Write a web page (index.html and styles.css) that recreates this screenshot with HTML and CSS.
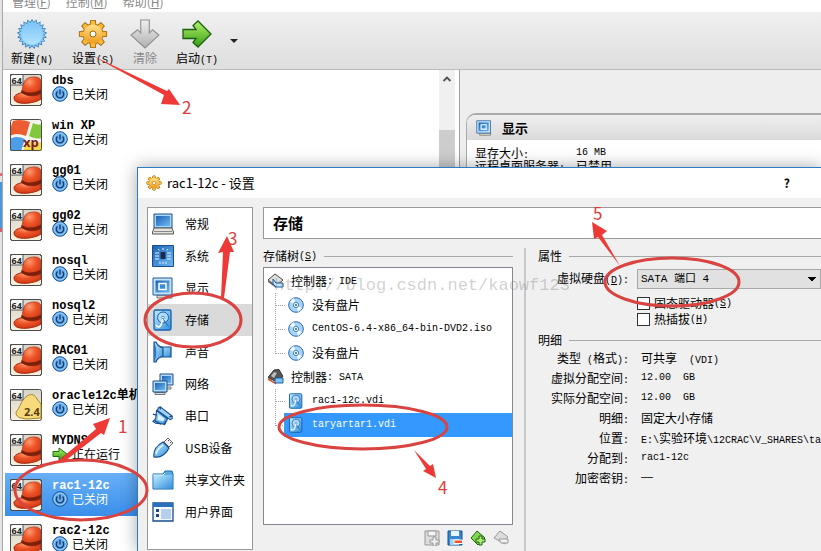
FILE: index.html
```html
<!DOCTYPE html>
<html lang="zh-CN">
<head>
<meta charset="utf-8">
<title>rac1-12c - 设置</title>
<link rel="stylesheet" href="styles.css">
</head>
<body>
<svg class="defs" aria-hidden="true">
  <defs>
    <linearGradient id="blue" x1="0" y1="0" x2="1" y2="1"><stop offset="0" stop-color="#c4ecff"/><stop offset="1" stop-color="#2f8fdc"/></linearGradient>
    <linearGradient id="sky" x1="0" y1="0" x2="0" y2="1"><stop offset="0" stop-color="#7cc4f8"/><stop offset="1" stop-color="#b4e4ff"/></linearGradient>
    <linearGradient id="deep" x1="0" y1="0" x2="1" y2="1"><stop offset="0" stop-color="#1c62b4"/><stop offset="1" stop-color="#6cb8f4"/></linearGradient>
    <linearGradient id="gold" x1="0" y1="0" x2="0" y2="1"><stop offset="0" stop-color="#ffe08a"/><stop offset="1" stop-color="#ee9c1c"/></linearGradient>
    <linearGradient id="green" x1="0" y1="0" x2="0" y2="1"><stop offset="0" stop-color="#b4f070"/><stop offset="1" stop-color="#35a010"/></linearGradient>
    <linearGradient id="grey" x1="0" y1="0" x2="0" y2="1"><stop offset="0" stop-color="#f0f0f0"/><stop offset="1" stop-color="#b0b0b0"/></linearGradient>
    <radialGradient id="hatfill" cx=".4" cy=".25" r=".8"><stop offset="0" stop-color="#ff9a70"/><stop offset=".45" stop-color="#ee5428"/><stop offset="1" stop-color="#cc3410"/></radialGradient>
    <linearGradient id="tile" x1="0" y1="0" x2="0" y2="1"><stop offset="0" stop-color="#d8d4c8"/><stop offset="1" stop-color="#f6f0dc"/></linearGradient>
    <g id="burst">
      <path id="tri" d="M14 0L26.120 21H1.880Z"/>
      <use href="#tri" transform="rotate(17.143 14 14)"/><use href="#tri" transform="rotate(34.286 14 14)"/><use href="#tri" transform="rotate(51.429 14 14)"/><use href="#tri" transform="rotate(68.571 14 14)"/><use href="#tri" transform="rotate(85.714 14 14)"/><use href="#tri" transform="rotate(102.857 14 14)"/>
    </g>
    <g id="cog">
      <circle cx="14" cy="14" r="9.5"/>
      <path id="tooth" d="M11.4 6L12 .8H16L16.6 6V22L16 27.2H12L11.4 22Z"/>
      <use href="#tooth" transform="rotate(45 14 14)"/><use href="#tooth" transform="rotate(90 14 14)"/><use href="#tooth" transform="rotate(135 14 14)"/>
    </g>
    <symbol id="new" viewBox="-1 -1 30 30"><use href="#burst" fill="#2c6fae" stroke="#2c6fae" stroke-width="1.2"/><use href="#burst" fill="#84caf8"/><circle cx="14" cy="14" r="10.500" fill="url(#sky)"/></symbol>
    <symbol id="gear" viewBox="-1 -1 30 30"><use href="#cog" fill="#a06a10" stroke="#a06a10" stroke-width="1.8"/><use href="#cog" fill="#f8b83c"/><circle cx="14" cy="14" r="9.5" fill="url(#gold)"/><circle cx="14" cy="14" r="3" fill="#fff" stroke="#a06a10"/></symbol>
    <symbol id="discard" viewBox="0 0 28 28"><path d="M10 1h8v12l3-3 6 5-13 12L1 15l6-5 3 3z" fill="url(#grey)" stroke="#8c8c8c"/></symbol>
    <symbol id="start" viewBox="0 0 30 28"><path d="M1 9.5h13l-3-4L16 1l13 13-13 13-5-4.500 3-4H1z" fill="url(#green)" stroke="#1e5e10" stroke-width="1.3"/></symbol>
    <symbol id="hat" viewBox="0 0 32 32">
      <rect x=".5" y=".5" width="31" height="31" rx="2" fill="url(#tile)" stroke="#4c4c4c"/>
      <path d="M31 17c-10 0-27 1-27 7 0 5 8 6 15 5 6-1 9-2 12-4z" fill="url(#hatfill)" stroke="#a02810"/>
      <path d="M12 18C13 9 14 5 20 3.500c6-1.500 10 0 11 3V20c-6 3-14 3-19-2z" fill="url(#hatfill)" stroke="#b03010" stroke-width=".7"/>
      <path d="M11.500 16c5 3.500 13 3.500 19.500-.5v4c-6 3.500-15 3-20-.8z" fill="#7c200c"/>
      <path d="M.5.5H13V11H.5z" fill="#fafaf8" stroke="#555"/><text x="1.500" y="9.500" class="tag">64</text>
      <rect x=".5" y=".5" width="31" height="31" rx="2" fill="none" stroke="#4c4c4c"/>
    </symbol>
    <symbol id="kernel" viewBox="0 0 32 32">
      <rect x=".5" y=".5" width="31" height="31" rx="2" fill="url(#tile)" stroke="#4c4c4c"/>
      <path d="M17 7c5-3 8-1 10 3l4 5v14l-14 1c-8-1-11-2-11-7 4-4 5-12 11-16z" fill="#f6da7c" stroke="#a8862c"/>
      <path d="M.5.5H13V11H.5z" fill="#fafaf8" stroke="#555"/><text x="1.500" y="9.500" class="tag">64</text>
      <text x="14" y="27" class="ver">2.4</text>
    </symbol>
    <symbol id="xp" viewBox="0 0 32 32">
      <rect width="32" height="32" rx="2" fill="#f4f4ec"/>
      <path d="M3 2c6-2 11-1 17 1l-4 14C10 15 6 14 0 17V10z" fill="#ec5c30"/>
      <path d="M23 4c4 2 6 2 9 1v14c-5 1-9 0-13-2z" fill="#82c83c"/>
      <path d="M0 20c6-3 10-2 15 0l-4 12H0z" fill="#4c9ee8"/>
      <path d="M17 22c5 2 9 2 15 1v9H13z" fill="#f6d84c"/>
      <text x="13" y="28" class="xp-text">xp</text>
      <rect x=".5" y=".5" width="31" height="31" rx="2" fill="none" stroke="#4c4c4c"/>
    </symbol>
    <symbol id="power" viewBox="0 0 16 16"><circle cx="8" cy="8" r="7.300" fill="#4a96dc" stroke="#18549c"/><circle cx="8" cy="8" r="6" fill="#6cb0ec" stroke="#a4d4fa"/><path d="M5.500 5.400a3.700 3.700 0 1 0 5 0M8 3.500V8.500" fill="none" stroke="#123c74" stroke-width="1.400"/></symbol>
    <symbol id="monitor" viewBox="0 0 22 22"><path d="M5 18h15v3H5z" fill="#d8d8c8" stroke="#777"/><path d="M1 1h19v17H1z" fill="#c8e4f8" stroke="#1c5896"/><path d="M3.500 3.500h14v12h-14z" fill="url(#deep)"/><path d="M7 6.500h7v6H7z" fill="#3c8cd8" stroke="#fff" stroke-width="1.500"/></symbol>
    <symbol id="general" viewBox="0 0 22 22"><path d="M2 1h18v14H2z" fill="#a8d8fc" stroke="#1c4c88"/><path d="M4 3h14v10H4z" fill="url(#deep)"/><path d="M2 15h18l1.500 4v2H.5v-2z" fill="#e4e4dc" stroke="#555"/><path d="M2 18.500h18" stroke="#888"/></symbol>
    <symbol id="system" viewBox="0 0 22 22"><path d="M.5.5h21v21H.5z" fill="url(#deep)" stroke="#184c8c"/><path d="M8.500 7h5v7h-5z" fill="#182c50"/><path d="M3 8h4M3 11h4M3 14h4M15 8h4M15 11h4M15 14h4M8 16.500V19M11 16.500V19M14 16.500V19M11 3v2M6 4l1.500 1.500M16 4l-1.500 1.500" stroke="#e4f4ff"/></symbol>
    <symbol id="disk" viewBox="0 0 22 22"><rect x="2" y="1" width="17" height="20" rx="1.500" fill="url(#blue)" stroke="#1860ac" stroke-width="1.300"/><circle cx="11" cy="8.500" r="5.500" fill="#b0dcfa" stroke="#1860ac"/><circle cx="11" cy="8.500" r="1.300" fill="#fff" stroke="#1860ac" stroke-width=".7"/><path d="M11 10l-2 6c-1 3-4 2-5 0" fill="none" stroke="#fff" stroke-width="1.600"/><path d="M11.500 10.500l5 7" stroke="#1860ac"/></symbol>
    <symbol id="sound" viewBox="0 0 22 22"><path d="M7 6h12v10H7z" fill="url(#blue)" stroke="#184c8c" stroke-width="1.200"/><path d="M2 1h2c1 3 4 5 7 6v8c-3 1-6 3-7 6H2z" fill="url(#blue)" stroke="#184c8c" stroke-width="1.200"/><path d="M2 1v20c3-5 3-15 0-20z" fill="#2c74c0"/></symbol>
    <symbol id="network" viewBox="0 0 22 22"><path d="M8 1h13v11H8z" fill="#b4dcfa" stroke="#1c4c88"/><path d="M10 3h9v7h-9z" fill="url(#deep)"/><path d="M11 14h8v2h-8zM3 19.500h10v2H3z" fill="#ddd" stroke="#777"/><path d="M1 8h14v11H1z" fill="#b4dcfa" stroke="#1c4c88"/><path d="M3 10h10v7H3z" fill="url(#deep)"/></symbol>
    <symbol id="serial" viewBox="0 0 24 22"><path d="M5 5l12 9-3 6-10-1-3-2 3-3z" fill="url(#blue)" stroke="#184c8c" stroke-width="1.200"/><path d="M7 2l2-1 13 10v3l-2 1L6 5z" fill="#9cd4f8" stroke="#184c8c" stroke-width="1.200"/><path d="M9 1v3M22 11l-3 1M1 9l4 1M13 21l2-4M3 16l7 4" stroke="#184c8c" fill="none" stroke-width="1.500"/><path d="M7 9l7 5-2 3-6-2z" fill="#dcf2ff"/></symbol>
    <symbol id="usb" viewBox="0 0 22 22"><path d="M12 5l4-4 5 5-4 4z" fill="#eee" stroke="#666"/><path d="M16 3l1 1M18 5l1 1" stroke="#444"/><path d="M2 20C1 13 4 9 11 5l6 6c-3 6-8 10-15 9z" fill="url(#blue)" stroke="#184c8c" stroke-width="1.200"/><path d="M4 17c1-4 3-6 7-9" fill="none" stroke="#e8f8ff" stroke-width="1.500"/></symbol>
    <symbol id="folder" viewBox="0 0 22 22"><path d="M1 5h10l2-3h7l1 3v15H1z" fill="#58acdf" stroke="#1868ac"/><path d="M1.500 6h19v13.500h-19z" fill="url(#blue)"/><path d="M1 6h10l2-2" fill="none" stroke="#d8f4ff"/></symbol>
    <symbol id="interface" viewBox="0 0 22 22"><path d="M1 2h20v18H1z" fill="#f4f8fc" stroke="#184c8c" stroke-width="1.300"/><path d="M1 2h20v4H1z" fill="#2870bc"/><path d="M9 8h10v10H9z" fill="#b4d0ec"/><path d="M4 8h3v3H4zM4 13h3v3H4z" fill="#1c4880"/></symbol>
    <symbol id="cd" viewBox="0 0 16 16"><circle cx="8" cy="8" r="7.300" fill="#a8d4f8" stroke="#2c68a8"/><path d="M8 8L2 5a7 7 0 0 1 4-4zM8 8l6 3a7 7 0 0 1-4 4z" fill="#e8f8ff"/><circle cx="8" cy="8" r="2.600" fill="#fff" stroke="#3c80c0"/><circle cx="8" cy="8" r="1" fill="#245c9c"/></symbol>
    <symbol id="ide" viewBox="0 0 16 16"><path d="M7 1l8 6-7 6-8-6z" fill="#e0e0dc" stroke="#444"/><path d="M0 7l8 6v2L0 9z" fill="#666"/><path d="M5 6l3 4h7v4H8L5 11z" fill="#c4e8ff" stroke="#1c5ca4"/></symbol>
    <symbol id="sata" viewBox="0 0 16 16"><path d="M6 1l5-.5 4 7-7 5-8-4z" fill="#555" stroke="#333"/><path d="M0 9l8 5v1.500L0 11z" fill="#d84c28"/><path d="M3 7l3-4 3 1-3 5z" fill="#bbb"/><path d="M7 9h8v5H7z" fill="#7cc4f4" stroke="#1c5ca4"/></symbol>
    <symbol id="add-disk" viewBox="0 0 16 16"><path d="M1 1h14v14H1z" fill="#ddd" stroke="#999"/><path d="M4 1h8v5H4z" fill="#f4f4f4" stroke="#999"/><path d="M9 7h3v3h3v3h-3v3H9v-3H6v-3h3z" fill="#eee" stroke="#999"/></symbol>
    <symbol id="remove-disk" viewBox="0 0 16 16"><path d="M1 1h14v14H1z" fill="#3888d0" stroke="#184c8c"/><path d="M4 1h8v5H4z" fill="#e8f4ff"/><path d="M3 9h9v6H3z" fill="#9cd0f4"/><path d="M7 10h8.500v3.500H7z" fill="#ee5030" stroke="#fff"/></symbol>
    <symbol id="add-ctl" viewBox="0 0 16 16"><path d="M7 1l8 7-7 7-7-7z" fill="#80d850" stroke="#246010"/><path d="M9 6h3v3h3v3h-3v3H9v-3H6V9h3z" fill="#a8f078" stroke="#246010"/></symbol>
    <symbol id="remove-ctl" viewBox="0 0 16 16"><path d="M7 1l8 6-3 3v4L1 8z" fill="#ddd" stroke="#999"/><path d="M6 9h9v4H8z" fill="#f0f0f0" stroke="#999"/></symbol>
    <symbol id="go" viewBox="0 0 16 16"><path d="M1 5.500h6V2l8 6-8 6v-3.500H1z" fill="url(#green)" stroke="#1e6e10"/></symbol>
  </defs>
</svg>

<div class="manager">
  <nav class="menubar"><a href="#">管理(<u>F</u>)</a><a href="#">控制(<u>M</u>)</a><a href="#">帮助(<u>H</u>)</a></nav>
  <div class="toolbar">
    <button class="tool"><svg><use href="#new"/></svg><span>新建<span class="en">(N)</span></span></button>
    <button class="tool"><svg><use href="#gear"/></svg><span>设置<span class="en">(S)</span></span></button>
    <button class="tool" disabled><svg><use href="#discard"/></svg><span>清除</span></button>
    <button class="tool"><svg><use href="#start"/></svg><span>启动<span class="en">(T)</span></span></button>
    <button class="more" aria-label="更多"></button>
  </div>
  <main class="content">
    <ul class="machines">
      <li><svg class="os"><use href="#hat"/></svg><div><b>dbs</b><span><svg><use href="#power"/></svg>已关闭</span></div></li>
      <li><svg class="os"><use href="#xp"/></svg><div><b>win XP</b><span><svg><use href="#power"/></svg>已关闭</span></div></li>
      <li><svg class="os"><use href="#hat"/></svg><div><b>gg01</b><span><svg><use href="#power"/></svg>已关闭</span></div></li>
      <li><svg class="os"><use href="#hat"/></svg><div><b>gg02</b><span><svg><use href="#power"/></svg>已关闭</span></div></li>
      <li><svg class="os"><use href="#hat"/></svg><div><b>nosql</b><span><svg><use href="#power"/></svg>已关闭</span></div></li>
      <li><svg class="os"><use href="#hat"/></svg><div><b>nosql2</b><span><svg><use href="#power"/></svg>已关闭</span></div></li>
      <li><svg class="os"><use href="#hat"/></svg><div><b>RAC01</b><span><svg><use href="#power"/></svg>已关闭</span></div></li>
      <li><svg class="os"><use href="#kernel"/></svg><div><b>oracle12c单机</b><span><svg><use href="#power"/></svg>已关闭</span></div></li>
      <li><svg class="os"><use href="#hat"/></svg><div><b>MYDNS</b><span><svg><use href="#go"/></svg>正在运行</span></div></li>
      <li class="selected"><svg class="os"><use href="#hat"/></svg><div><b>rac1-12c</b><span><svg><use href="#power"/></svg>已关闭</span></div></li>
      <li><svg class="os"><use href="#hat"/></svg><div><b>rac2-12c</b><span><svg><use href="#power"/></svg>已关闭</span></div></li>
    </ul>
    <div class="scrollbar"><svg viewBox="0 0 16 16"><path d="M4.500 10L8 6.500 11.500 10" fill="none" stroke="#505050" stroke-width="1.800"/></svg><i></i></div>
    <section class="details">
      <div class="card">
        <h2><svg><use href="#monitor"/></svg>显示</h2>
        <dl><dt>显存大小<span class="en">:</span></dt><dd class="en">16 MB</dd><dt>远程桌面服务器<span class="en">:</span></dt><dd>已禁用</dd></dl>
      </div>
    </section>
  </main>
</div>

<section class="dialog" role="dialog" aria-label="设置">
  <header class="titlebar"><svg><use href="#gear"/></svg><span>rac1-12c - 设置</span><button aria-label="帮助">?</button></header>
  <div class="settings">
    <ul class="categories">
      <li><svg><use href="#general"/></svg>常规</li>
      <li><svg><use href="#system"/></svg>系统</li>
      <li><svg><use href="#monitor"/></svg>显示</li>
      <li class="current"><svg><use href="#disk"/></svg>存储</li>
      <li><svg><use href="#sound"/></svg>声音</li>
      <li><svg><use href="#network"/></svg>网络</li>
      <li><svg><use href="#serial"/></svg>串口</li>
      <li><svg><use href="#usb"/></svg>USB设备</li>
      <li><svg><use href="#folder"/></svg>共享文件夹</li>
      <li><svg><use href="#interface"/></svg>用户界面</li>
    </ul>
    <div class="page">
      <h1>存储</h1>
      <div class="columns">
        <div class="storage">
          <h3 class="group">存储树<span class="en">(<u>S</u>)</span></h3>
          <ul class="tree">
            <li><div class="ctl"><svg><use href="#ide"/></svg>控制器<span class="en">: IDE</span></div>
              <ul>
                <li><svg><use href="#cd"/></svg>没有盘片</li>
                <li><svg><use href="#cd"/></svg><span class="en">CentOS-6.4-x86_64-bin-DVD2.iso</span></li>
                <li><svg><use href="#cd"/></svg>没有盘片</li>
              </ul></li>
            <li><div class="ctl"><svg><use href="#sata"/></svg>控制器<span class="en">: SATA</span></div>
              <ul>
                <li><svg><use href="#disk"/></svg><span class="en">rac1-12c.vdi</span></li>
                <li class="active"><svg><use href="#disk"/></svg><span class="en">taryartar1.vdi</span></li>
              </ul></li>
          </ul>
          <div class="actions">
            <button disabled aria-label="添加虚拟硬盘"><svg><use href="#add-disk"/></svg></button>
            <button aria-label="删除虚拟硬盘"><svg><use href="#remove-disk"/></svg></button>
            <button aria-label="添加控制器"><svg><use href="#add-ctl"/></svg></button>
            <button disabled aria-label="删除控制器"><svg><use href="#remove-ctl"/></svg></button>
          </div>
        </div>
        <div class="props">
          <h3 class="group">属性</h3>
          <div class="form">
            <label for="port">虚拟硬盘<span class="en">(<u>D</u>):</span></label>
            <select id="port"><option>SATA 端口 4</option></select>
            <div class="checks">
              <label><input type="checkbox">固态驱动器<span class="en">(<u>S</u>)</span></label>
              <label><input type="checkbox">热插拔<span class="en">(<u>H</u>)</span></label>
            </div>
          </div>
          <h3 class="group">明细</h3>
          <dl class="info">
            <dt>类型<span class="en"> (</span>格式<span class="en">):</span></dt><dd>可共享<span class="en">&nbsp; (VDI)</span></dd>
            <dt>虚拟分配空间<span class="en">:</span></dt><dd class="en">12.00&nbsp; GB</dd>
            <dt>实际分配空间<span class="en">:</span></dt><dd class="en">12.00&nbsp; GB</dd>
            <dt>明细<span class="en">:</span></dt><dd>固定大小存储</dd>
            <dt>位置<span class="en">:</span></dt><dd><span class="en">E:\</span>实验环境<span class="en">\12CRAC\V_SHARES\ta</span></dd>
            <dt>分配到<span class="en">:</span></dt><dd class="en">rac1-12c</dd>
            <dt>加密密钥<span class="en">:</span></dt><dd class="en">——</dd>
          </dl>
        </div>
      </div>
    </div>
  </div>
</section>

<div class="watermark">http://blog.csdn.net/kaowf123</div>
<svg class="marks" viewBox="0 0 821 551" width="821" height="551">
  <g fill="none" stroke="#d94340" stroke-width="3">
    <ellipse cx="81" cy="490" rx="66" ry="30"/><ellipse cx="193" cy="320" rx="48" ry="27"/><ellipse cx="363" cy="427" rx="84" ry="22"/><ellipse cx="672" cy="282" rx="67" ry="24"/>
  </g>
  <g fill="#ee3a36">
    <path d="M91 55L164 95L161 104L180 105L169 89L167 91Z"/>
    <path d="M57 462L96 429L93 424L110 418L104 435L101 433L65 461Z"/>
    <path d="M221 298L223 252L218 253L227 236L234 252L230 252L224 298Z"/>
    <path d="M414 450L426 469L423 471L436 478L433 464L430 466Z"/>
    <path d="M620 266L602 235L607 231L592 222L594 239L598 237Z"/>
  </g>
  <g class="digits"><text x="182" y="114">2</text><text x="118" y="433">1</text><text x="228" y="245">3</text><text x="438" y="494">4</text><text x="593" y="220">5</text></g>
</svg>
</body>
</html>
```
FILE: styles.css
```css
* { box-sizing: border-box; }
body {
  margin: 0; height: 100vh; overflow: hidden; position: relative;
  font: 12px/16px "Noto Sans CJK SC", sans-serif; color: #000; background: #fff;
}
ul, dl, dd, h1, h2, h3 { margin: 0; padding: 0; }
ul { list-style: none; }
svg { display: block; flex: none; }
button { font: inherit; color: inherit; border: 0; padding: 0; background: none; }
a { color: inherit; text-decoration: none; }
.defs { position: absolute; width: 0; height: 0; }
.en { font-family: "Liberation Mono", "Noto Sans CJK SC", monospace; font-size: 10px; white-space: pre; }
.tag { font: bold 9px "Open Sans", sans-serif; fill: #222; }
.ver { font: bold 11px "Open Sans", sans-serif; fill: #5c3c10; }
.xp-text { font: bold 13px "Open Sans", sans-serif; fill: #7c1c24; }

/* The 3px strip on the left is the window behind this one. */
.manager {
  display: flex; flex-direction: column; height: 100%; padding-left: 3px;
  background:
    linear-gradient(transparent 173px, #e07078 173px 176px, transparent 176px 182px, #4c98dc 182px 228px, #d06070 228px 232px, transparent 232px) 0 0 / 2px 100% no-repeat,
    linear-gradient(90deg, #e4e4e4 2px, #a8a8a8 2px 3px, #fff 3px);
}
.menubar { display: flex; gap: 15px; height: 12px; padding-left: 9px; line-height: 4px; color: #888; }
.toolbar {
  display: flex; align-items: flex-start; gap: 19px; height: 58px; padding: 7px 8px 0;
  background: linear-gradient(#f0f0f0, #dedede); border-bottom: 1px solid #bcbcbc;
}
.tool { display: flex; flex-direction: column; align-items: center; gap: 1px; white-space: nowrap; }
.tool svg { width: 30px; height: 30px; margin: 0 -3px; }
.tool:disabled { color: #8a8a8a; }
.more { margin: 20px 0 0 -7px; border: 4px solid transparent; border-top-color: #222; border-bottom: 0; }
.content { flex: 1; min-height: 0; display: grid; grid-template-columns: 436px 16px 1fr; overflow: hidden; }
.machines { overflow: hidden; margin-top: -2px; padding-left: 2px; background: #fff; }
.machines li { display: flex; align-items: center; gap: 10px; height: 43px; margin-bottom: 2px; padding-left: 5px; }
.machines .os { width: 32px; height: 32px; }
.machines div { padding-bottom: 5px; }
.machines b { display: block; font: bold 12px/14px "Liberation Mono", "Noto Sans CJK SC", monospace; }
.machines span { display: flex; align-items: center; gap: 4px; height: 12px; line-height: 12px; }
.machines span svg { width: 16px; height: 16px; }
.machines .selected { color: #fff; background: linear-gradient(#68b0f8, #3a8eea); }
.scrollbar { background: #f0f0f0; }
.scrollbar svg { width: 16px; height: 18px; }
.scrollbar i { display: block; height: 100%; margin-top: 42px; background: #cdcdcd; }
.details { border-left: 1px solid #a0a0a0; margin-left: 4px; padding: 43px 0 0 6px; background: #eee; }
.card { height: 100%; border: 1px solid #aaa; border-right: 0; border-top-width: 2px; border-radius: 10px 0 0 0; background: #fff; overflow: hidden; }
.card h2 { display: flex; align-items: center; gap: 10px; height: 25px; padding-left: 9px; font-size: 13px; background: linear-gradient(#efefef, #dadada); }
.card h2 svg { width: 16px; height: 16px; }
.card dl { display: grid; grid-template-columns: 101px 1fr; grid-auto-rows: 13px; padding: 6px 8px; line-height: 13px; }

.dialog {
  position: absolute; left: 137px; top: 167px; right: 0; bottom: 0; display: flex; flex-direction: column;
  border: solid #2a7cc4; border-width: 1px 0 0 1px; background: #f0f0f0; box-shadow: 0 0 16px rgba(0, 0, 0, .35);
}
.titlebar { display: flex; align-items: center; gap: 5px; height: 30px; padding: 0 31px 0 8px; font-size: 13px; background: #fff; }
.titlebar svg { width: 16px; height: 16px; }
.titlebar button { margin-left: auto; font-size: 12px; font-weight: bold; }
.settings { flex: 1; min-height: 0; display: grid; grid-template-columns: 106px 1fr; gap: 10px; padding: 9px 0 0 9px; }
.categories { margin-bottom: 1px; border: 1px solid #999; background: #fff; }
.categories li { display: flex; align-items: center; gap: 11px; height: 32px; padding-left: 4px; white-space: nowrap; }
.categories svg { width: 22px; height: 22px; }
.categories .current { background: #dadada; }
.page { display: flex; flex-direction: column; min-width: 0; }
.page h1 { height: 32px; padding-left: 9px; font-size: 15px; line-height: 30px; border: 1px solid #999; border-right: 0; background: #fff; }
.columns { flex: 1; min-height: 0; display: grid; grid-template-columns: 250px 1fr; gap: 11px; padding-top: 9px; }
.group { display: flex; align-items: center; height: 16px; font-size: 12px; font-weight: normal; }
.group::after { content: ""; flex: 1; height: 1px; margin-left: 7px; background: #a8a8a8; }
.group .en, .checks .en, .ctl .en { padding-top: 2px; }
.tree { height: 258px; margin-top: 3px; padding-top: 1px; border: 1px solid #828790; background: #fff; }
.tree .ctl, .tree ul li { display: flex; align-items: center; height: 24px; }
.tree .ctl { padding-left: 4px; }
.tree .ctl svg { width: 16px; height: 16px; margin-right: 7px; }
.tree ul { padding-left: 11px; }
.tree ul li::before { content: ""; align-self: flex-start; width: 9px; height: 12px; border: dotted #a0a0a0; border-width: 0 0 1px 1px; }
.tree ul li:not(:last-child) { background: repeating-linear-gradient(#aaa 0 1px, #fff 1px 2px) 0 0 / 1px 100% no-repeat; }
.tree ul svg { width: 16px; height: 16px; margin: 0 8px 0 3px; }
.tree .active .en { color: #fff; }
.tree .active { background: linear-gradient(#3399ff, #3399ff) 9px 0 no-repeat; }
.actions { display: flex; justify-content: flex-end; gap: 7px; padding: 5px 4px 0 0; }
.actions svg { width: 16px; height: 16px; }
.props { min-width: 0; padding-left: 12px; border-left: 2px solid #c8c8c8; }
.form { display: grid; grid-template-columns: 91px 1fr; column-gap: 8px; row-gap: 6px; padding: 5px 0; align-items: center; }
.form > label { text-align: right; white-space: nowrap; }
.form select {
  appearance: none; height: 20px; padding: 0 3px; border: 1px solid #a8a8a8; border-radius: 0; color: #000;
  font: 11px "Liberation Mono", "Noto Sans CJK SC", monospace;
  background:
    linear-gradient(45deg, transparent 50%, #000 50%) right 8px center / 4px 4px no-repeat,
    linear-gradient(-45deg, transparent 50%, #000 50%) right 4px center / 4px 4px no-repeat,
    #e1e1e1;
}
.checks { grid-column: 2; }
.checks label { display: flex; align-items: center; height: 16px; white-space: nowrap; }
.checks input { appearance: none; width: 13px; height: 13px; margin: 0 4px 0 0; border: 1px solid #333; background: #fff; }
.info { display: grid; grid-template-columns: 91px minmax(0, 1fr); grid-auto-rows: 20px; column-gap: 12px; line-height: 20px; white-space: nowrap; }
.info dt { justify-self: end; }
.info dd { overflow: hidden; }

.watermark { position: absolute; left: 274px; top: 275px; font: 17px/22px "Liberation Mono", monospace; color: rgba(120, 120, 120, .35); pointer-events: none; }
.marks { position: absolute; left: 0; top: 0; pointer-events: none; }
.digits { font: 17px "Noto Sans CJK SC", sans-serif; fill: #e03c3a; }
```
